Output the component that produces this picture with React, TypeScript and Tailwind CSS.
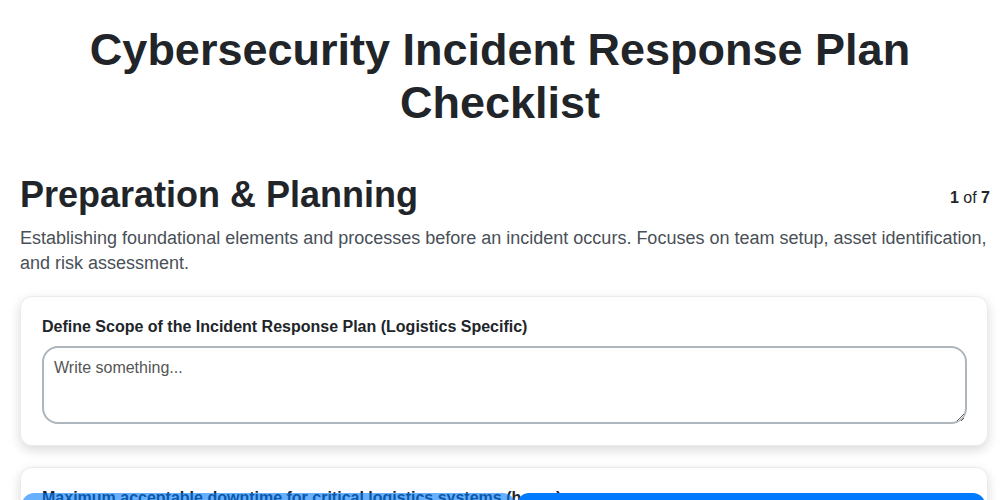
import React from 'react';

const sections = [
  {
    label: 'Define Scope of the Incident Response Plan (Logistics Specific)',
    type: 'textarea',
  },
  {
    label: 'Maximum acceptable downtime for critical logistics systems (hours)',
    type: 'number',
  },
];

const App = () => {
  return (
    <div className="min-h-screen bg-white font-['Liberation_Sans',Arial,sans-serif] text-[#212529]">
      <div className="pl-5 pr-[10px] pt-[23px] pb-24">
        <h1 className="-ml-[10px] text-center text-[45px] font-bold leading-[53px] px-10">
          Cybersecurity Incident Response Plan Checklist
        </h1>

        <div className="mt-[44px] flex items-start justify-between">
          <h2 className="text-[36px] font-bold leading-[44px]">Preparation &amp; Planning</h2>
          <div className="mt-[13px] text-base">
            <span className="font-bold">1</span> of <span className="font-bold">7</span>
          </div>
        </div>
        <p className="mt-[9px] text-lg leading-[25px] text-[#495057]">
          Establishing foundational elements and processes before an incident occurs. Focuses on team setup, asset
          identification, and risk assessment.
        </p>

        <div className="mt-[20px] mr-[2px] flex flex-col gap-[21px]">
          {sections.map((s) => (
            <div
              key={s.label}
              className="rounded-xl border border-[#e9ecef] bg-white pl-[21px] pr-[20px] pt-[20px] pb-[21px] shadow-[0_4px_12px_rgba(0,0,0,0.15)]"
            >
              <label className="block text-base font-bold leading-5">{s.label}</label>
              {s.type === 'textarea' ? (
                <textarea
                  placeholder="Write something..."
                  className="mt-[9px] block h-[78px] w-full rounded-2xl border-2 border-[#adb5bd] px-[10px] py-[8px] text-base placeholder:text-[#555] outline-none"
                />
              ) : (
                <input
                  type="number"
                  className="mt-[9px] block h-[48px] w-full rounded-2xl border-2 border-[#adb5bd] px-[10px] text-base outline-none"
                />
              )}
            </div>
          ))}
        </div>
      </div>

      <div className="fixed left-[22px] right-[15px] top-[493px] flex gap-[2px]">
        <button className="h-14 w-[493px] rounded-xl bg-[#007bff] opacity-60 text-white font-bold">Previous</button>
        <button className="h-14 flex-1 rounded-xl bg-[#007bff] text-white font-bold">Next</button>
      </div>
    </div>
  );
};

export default App;
